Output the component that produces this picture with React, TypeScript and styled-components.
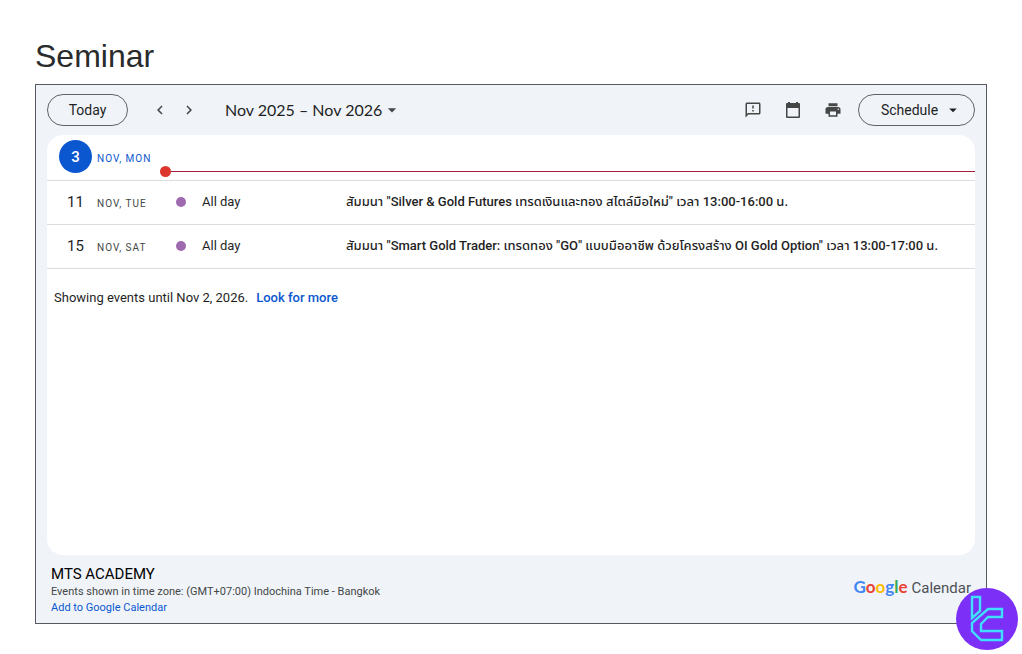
import React from 'react';
import styled, { createGlobalStyle } from 'styled-components';
import {
  MdChevronLeft,
  MdChevronRight,
  MdArrowDropDown,
  MdPrint,
  MdOutlineFeedback,
} from 'react-icons/md';

const Global = createGlobalStyle`
  *, *::before, *::after { box-sizing: border-box; }
  body {
    margin: 0;
    background: #fff;
    color: #1f1f1f;
    font-family: Roboto, "Noto Sans", sans-serif;
    font-size: 13px;
    line-height: 20px;
  }
  button, a, h1, h2, p { font: inherit; margin: 0; }
  button { background: none; border: 0; padding: 0; color: inherit; cursor: pointer; }
  a { color: #0b57d0; text-decoration: none; }
`;

const Page = styled.main`
  min-height: 100vh;
  padding: 36px 35px 30px;
`;

const Title = styled.h1`
  font: 400 32px/40px "Liberation Sans", sans-serif;
  color: #292b2c;
  margin-bottom: 8px;
`;

const Calendar = styled.section`
  display: flex;
  flex-direction: column;
  height: calc(100vh - 114px);
  min-height: 320px;
  padding: 0 11px;
  border: 1px solid #555a62;
  background: #f0f4f9;
`;

const Toolbar = styled.header`
  display: flex;
  align-items: center;
  height: 50px;
  flex: none;
`;

const PillButton = styled.button<{ $wide?: boolean }>`
  display: flex;
  align-items: center;
  justify-content: center;
  gap: 6px;
  height: 32px;
  width: ${(p) => (p.$wide ? '117px' : '81px')};
  padding-left: ${(p) => (p.$wide ? '10px' : '0')};
  border: 1px solid #5f6368;
  border-radius: 16px;
  font-size: 14px;
`;

const Arrows = styled.div`
  display: flex;
  gap: 9px;
  margin: 0 26px 0 22px;
`;

const IconButton = styled.button`
  display: grid;
  place-items: center;
  width: 20px;
  height: 20px;
  color: #444746;
`;

const RangeButton = styled.button`
  display: flex;
  align-items: center;
  font-family: Lato, sans-serif;
  font-size: 16px;
  white-space: nowrap;
`;

const Tools = styled.div`
  display: flex;
  gap: 20px;
  margin: 0 15px 0 auto;
`;

const Sheet = styled.div`
  flex: 1;
  min-height: 0;
  overflow: hidden;
  border-radius: 16px;
  background: #fff;
`;

const DayRow = styled.div<{ $today?: boolean }>`
  display: flex;
  align-items: center;
  height: ${(p) => (p.$today ? '46px' : '44px')};
  padding-bottom: 2px;
  border-bottom: 1px solid #dadce0;
  position: relative;
`;

const DayNumber = styled.span<{ $today?: boolean }>`
  display: grid;
  place-items: center;
  width: 33px;
  height: 33px;
  margin: 0 5px 0 12px;
  border-radius: 50%;
  font-size: 15px;
  font-weight: ${(p) => (p.$today ? 500 : 400)};
  background: ${(p) => (p.$today ? '#0b57d0' : 'transparent')};
  color: ${(p) => (p.$today ? '#fff' : '#1f1f1f')};
`;

const DayLabel = styled.span<{ $today?: boolean }>`
  width: 79px;
  padding-top: 4px;
  font-size: 10px;
  letter-spacing: 1px;
  color: ${(p) => (p.$today ? '#0b57d0' : '#444746')};
`;

const NowLine = styled.div`
  position: absolute;
  left: 118px;
  right: 0;
  top: 36px;
  border-top: 1px solid #a3203a;
  &::before {
    content: '';
    position: absolute;
    left: -5px;
    top: -6px;
    width: 11px;
    height: 11px;
    border-radius: 50%;
    background: #dc362e;
  }
`;

const Dot = styled.span`
  width: 10px;
  height: 10px;
  margin-right: 16px;
  border-radius: 50%;
  background: #9e69af;
`;

const EventTime = styled.span`
  width: 144px;
`;

const EventTitle = styled.span`
  flex: 1;
  min-width: 0;
  font-family: Roboto, "Noto Sans Thai", "Noto Sans", sans-serif;
  font-weight: 500;
  white-space: nowrap;
`;

const More = styled.p`
  display: flex;
  gap: 8px;
  padding: 19px 7px;
`;

const MoreLink = styled.a`
  font-weight: 500;
`;

const Footer = styled.footer`
  display: flex;
  justify-content: space-between;
  align-items: flex-start;
  flex: none;
  height: 68px;
  padding: 9px 4px 0;
  font-size: 11px;
  line-height: 16px;
  color: #444746;
`;

const CalendarName = styled.h2`
  font-size: 15px;
  line-height: 20px;
  color: #000;
`;

const Brand = styled.div`
  display: flex;
  align-items: baseline;
  gap: 4px;
  padding-top: 13px;
  font-size: 15px;
  line-height: 20px;
  color: #4d5156;
`;

const GoogleMark = styled.span`
  font-family: Lato, sans-serif;
  font-size: 17px;
  font-weight: 700;
`;

const Letter = styled.span<{ $color: string }>`
  color: ${(p) => p.$color};
`;

const Badge = styled.button`
  position: fixed;
  right: 4px;
  bottom: 4px;
  width: 62px;
  height: 62px;
`;

const events = [
  { day: '11', label: 'NOV, TUE', title: 'สัมมนา "Silver & Gold Futures เทรดเงินและทอง สไตล์มือใหม่" เวลา 13:00-16:00 น.' },
  { day: '15', label: 'NOV, SAT', title: 'สัมมนา "Smart Gold Trader: เทรดทอง "GO" แบบมืออาชีพ ด้วยโครงสร้าง OI Gold Option" เวลา 13:00-17:00 น.' },
];

const google: [string, string][] = [
  ['G', '#4285f4'], ['o', '#ea4335'], ['o', '#fbbc05'],
  ['g', '#4285f4'], ['l', '#34a853'], ['e', '#ea4335'],
];

export default function App() {
  return (
    <Page>
      <Global />
      <Title>Seminar</Title>
      <Calendar>
        <Toolbar>
          <PillButton>Today</PillButton>
          <Arrows>
            <IconButton aria-label="Previous"><MdChevronLeft size={18} /></IconButton>
            <IconButton aria-label="Next"><MdChevronRight size={18} /></IconButton>
          </Arrows>
          <RangeButton>Nov 2025 – Nov 2026 <MdArrowDropDown size={20} color="#444746" /></RangeButton>
          <Tools>
            <IconButton aria-label="Send feedback"><MdOutlineFeedback size={18} /></IconButton>
            <IconButton aria-label="Open calendar">
              <svg width="16" height="16" viewBox="0 0 16 16" fill="currentColor">
                <path fillRule="evenodd" d="M3 0h2v1h6V0h2v1h1a1 1 0 0 1 1 1v13a1 1 0 0 1-1 1H2a1 1 0 0 1-1-1V2a1 1 0 0 1 1-1h1zM2.500 6v8.500h11V6z" />
              </svg>
            </IconButton>
            <IconButton aria-label="Print"><MdPrint size={18} /></IconButton>
          </Tools>
          <PillButton $wide>Schedule <MdArrowDropDown size={18} /></PillButton>
        </Toolbar>
        <Sheet>
          <DayRow $today>
            <DayNumber $today>3</DayNumber>
            <DayLabel $today>NOV, MON</DayLabel>
            <NowLine />
          </DayRow>
          {events.map((e) => (
            <DayRow key={e.day}>
              <DayNumber>{e.day}</DayNumber>
              <DayLabel>{e.label}</DayLabel>
              <Dot />
              <EventTime>All day</EventTime>
              <EventTitle>{e.title}</EventTitle>
            </DayRow>
          ))}
          <More>
            <span>Showing events until Nov 2, 2026.</span>
            <MoreLink href="#more">Look for more</MoreLink>
          </More>
        </Sheet>
        <Footer>
          <div>
            <CalendarName>MTS ACADEMY</CalendarName>
            <p>Events shown in time zone: (GMT+07:00) Indochina Time - Bangkok</p>
            <a href="#add">Add to Google Calendar</a>
          </div>
          <Brand>
            <GoogleMark>
              {google.map(([c, color], i) => <Letter key={i} $color={color}>{c}</Letter>)}
            </GoogleMark>
            <span>Calendar</span>
          </Brand>
        </Footer>
      </Calendar>
      <Badge aria-label="Open assistant">
        <svg width="62" height="62" viewBox="0 0 62 62" fill="none">
          <circle cx="31" cy="31" r="31" fill="#7b2ff7" />
          <g stroke="#3fe0ff" strokeWidth="2.400">
            <path d="M16 9h8v14l-8 7z" />
            <path d="M46 21v8H32l-7 7v7h21v9H25l-9-9v-8l16-14z" />
          </g>
        </svg>
      </Badge>
    </Page>
  );
}
